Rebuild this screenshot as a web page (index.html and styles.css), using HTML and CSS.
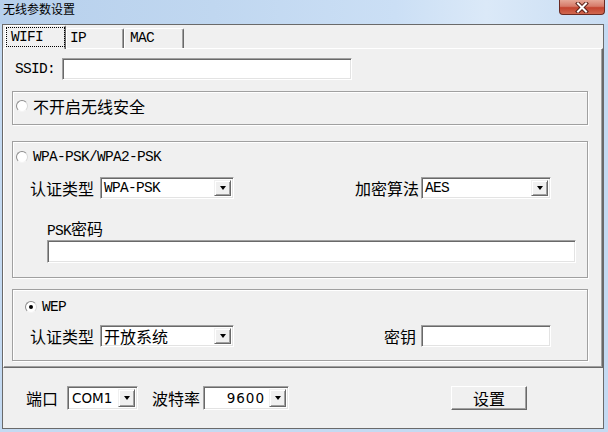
FILE: index.html
```
<!DOCTYPE html>
<html lang="zh-CN">
<head>
<meta charset="utf-8">
<title>无线参数设置</title>
<link rel="stylesheet" href="styles.css">
</head>
<body>
<div class="titlebar">
  <span class="title">无线参数设置</span>
  <div class="close">
    <svg width="14" height="11" viewBox="0 0 14 11"><path d="M3 1.5 L11 9.5 M11 1.5 L3 9.5" stroke="#5a2019" stroke-width="4" stroke-linecap="square"/><path d="M3 1.5 L11 9.5 M11 1.5 L3 9.5" stroke="#ffffff" stroke-width="2" stroke-linecap="square"/></svg>
  </div>
</div>
<div class="window">
  <div class="tabs">
    <div class="tab active"><span class="focus">WIFI</span></div>
    <div class="tab t-ip">IP</div>
    <div class="tab t-mac">MAC</div>
  </div>
  <div class="panel">
    <div class="ssid-row"><span class="en ssid-lbl">SSID:</span><div class="input ssid"></div></div>

    <div class="group g1">
      <div class="radio-row r1"><span class="radio"></span><span class="cn">不开启无线安全</span></div>
    </div>

    <div class="group g2">
      <div class="radio-row r1"><span class="radio"></span><span class="en">WPA-PSK/WPA2-PSK</span></div>
      <div class="field-row">
        <div class="pair"><span class="lbl">认证类型</span><div class="select s-auth"><span class="val en">WPA-PSK</span><span class="arrow"></span></div></div>
        <div class="pair"><span class="lbl lbl-tight">加密算法</span><div class="select s-enc"><span class="val en">AES</span><span class="arrow"></span></div></div>
      </div>
      <div class="psk-label"><span class="en">PSK</span>密码</div>
      <div class="input psk"></div>
    </div>

    <div class="group g3">
      <div class="radio-row r3"><span class="radio checked"></span><span class="en">WEP</span></div>
      <div class="field-row fr3">
        <div class="pair"><span class="lbl">认证类型</span><div class="select s-auth"><span class="val">开放系统</span><span class="arrow"></span></div></div>
        <div class="pair"><span class="lbl lbl-key">密钥</span><div class="input key"></div></div>
      </div>
    </div>
  </div>
  <div class="footer">
    <span class="lbl-port">端口</span>
    <div class="select s-com"><span class="val num">COM1</span><span class="arrow"></span></div>
    <span class="lbl-baud">波特率</span>
    <div class="select s-baud"><span class="val num right">9600</span><span class="arrow"></span></div>
    <div class="button">设置</div>
  </div>
</div>
</body>
</html>
```
FILE: styles.css
```
* { box-sizing: border-box; }
html, body { margin: 0; padding: 0; }
body {
  width: 608px;
  height: 432px;
  overflow: hidden;
  background: #c4daf2;
  font-family: "Noto Sans CJK SC", sans-serif;
  font-size: 16px;
  color: #000;
}
.en {
  font-family: "Liberation Mono", "Noto Sans CJK SC", monospace;
  font-size: 14.5px;
  letter-spacing: -0.7px;
}
.titlebar {
  height: 24px;
  display: flex;
  justify-content: space-between;
  align-items: flex-start;
  background: linear-gradient(to right, #b7d0ec 0%, #c0d7f0 35%, #cbdff5 65%, #dbe9f8 80%, #c9ddf3 100%);
}
.title {
  font-size: 12px;
  line-height: 16px;
  padding: 1px 0 0 3px;
}
.close {
  width: 46px;
  height: 15px;
  margin-right: 3px;
  border: 1px solid #6a2a22;
  border-top: none;
  border-radius: 0 0 4px 4px;
  background: linear-gradient(#e6a797 0%, #d67a69 45%, #c3432f 55%, #d06850 100%);
  display: flex;
  justify-content: center;
  align-items: center;
}
.close svg { display: block; }
.window {
  margin-left: 2px;
  width: 602px;
  height: 405px;
  border: 1px solid #6a6a6a;
  background: #f0f0f0;
  display: flex;
  flex-direction: column;
}
.tabs {
  height: 23px;
  display: flex;
  align-items: flex-end;
  padding-left: 2px;
  flex: none;
}
.tab {
  height: 20px;
  border-top: 1px solid #fff;
  border-left: 1px solid #fff;
  border-right: 1px solid #696969;
  border-radius: 2px 2px 0 0;
  box-shadow: inset -1px 0 0 #a0a0a0;
  font-family: "Liberation Mono", monospace;
  font-size: 14.5px;
  letter-spacing: -0.7px;
  line-height: 19px;
}
.t-ip { width: 58px; padding-left: 3px; }
.t-mac { width: 60px; padding-left: 5px; }
.tab.active {
  width: 61px;
  height: 24px;
  margin-bottom: -1px;
  position: relative;
  z-index: 1;
  background: #f0f0f0;
  padding: 1px 1px 2px 0;
}
.focus {
  display: block;
  width: 59px;
  height: 20px;
  border: 1px dotted #000;
  padding-left: 4px;
  line-height: 18px;
}
.panel {
  flex: none;
  height: 320px;
  border-top: 1px solid #fff;
  border-left: 1px solid #fff;
  border-right: 1px solid #696969;
  border-bottom: 1px solid #696969;
  box-shadow: inset -1px -1px 0 #a0a0a0;
  padding-left: 8px;
}
.ssid-row {
  margin-top: 9px;
  height: 22px;
  display: flex;
  align-items: center;
  padding-left: 3px;
}
.ssid-lbl { width: 40px; margin-right: 7px; }
.input {
  background: #fff;
  border-top: 1px solid #a0a0a0;
  border-left: 1px solid #a0a0a0;
  border-bottom: 1px solid #fff;
  border-right: 1px solid #fff;
  box-shadow: inset 1px 1px 0 #696969, inset -1px -1px 0 #e3e3e3;
}
.input.ssid { width: 290px; height: 22px; }
.group {
  width: 576px;
  border: 1px solid #a0a0a0;
  box-shadow: inset 1px 1px 0 #fff, 1px 1px 0 #fff;
}
.g1 {
  margin-top: 11px;
  height: 34px;
  padding-bottom: 4px;
  display: flex;
  align-items: center;
}
.g2 {
  margin-top: 16px;
  height: 137px;
  padding-top: 5px;
}
.g3 {
  margin-top: 11px;
  height: 72px;
  padding-top: 7px;
}
.radio-row {
  display: flex;
  align-items: center;
  height: 20px;
  line-height: 20px;
}
.r1 { padding-left: 3px; }
.r3 { padding-left: 12px; }
.radio {
  flex: none;
  width: 12px;
  height: 12px;
  margin-right: 5px;
  border-radius: 50%;
  background: #fff;
  border: 1px solid;
  border-color: #8c8c8c #d8d8d8 #f4f4f4 #8c8c8c;
  display: flex;
  align-items: center;
  justify-content: center;
}
.radio.checked::after {
  content: "";
  width: 4px;
  height: 4px;
  border-radius: 50%;
  background: #000;
}
.field-row {
  margin-top: 10px;
  height: 22px;
  display: flex;
  justify-content: space-between;
  align-items: center;
  padding-left: 17px;
  padding-right: 36px;
}
.fr3 { margin-top: 8px; }
.pair {
  display: flex;
  align-items: center;
  line-height: 20px;
}
.lbl { margin-right: 6px; }
.lbl-tight { margin-right: 2px; }
.lbl-key { margin-right: 5px; }
.select {
  display: flex;
  align-items: stretch;
  background: #fff;
  border-top: 1px solid #a0a0a0;
  border-left: 1px solid #a0a0a0;
  border-bottom: 1px solid #fff;
  border-right: 1px solid #fff;
  box-shadow: inset 1px 1px 0 #696969, inset -1px -1px 0 #e3e3e3;
  padding: 2px;
}
.s-auth { width: 134px; height: 22px; }
.s-enc { width: 130px; height: 22px; }
.s-com { width: 71px; height: 24px; }
.s-baud { width: 86px; height: 24px; }
.val {
  flex: 1;
  padding-left: 1px;
  display: flex;
  align-items: center;
  white-space: nowrap;
  line-height: 16px;
}
.num {
  font-family: "DejaVu Sans", sans-serif;
  font-size: 13.5px;
}
.s-com .num { padding-left: 2px; }
.right {
  justify-content: flex-end;
  padding-right: 4px;
  letter-spacing: 1px;
}
.arrow {
  flex: none;
  width: 17px;
  background: #f0f0f0;
  border: 1px solid;
  border-color: #f0f0f0 #696969 #696969 #f0f0f0;
  box-shadow: inset 1px 1px 0 #fff, inset -1px -1px 0 #a0a0a0;
  display: flex;
  align-items: center;
  justify-content: center;
}
.arrow::after {
  content: "";
  width: 0;
  height: 0;
  border-left: 3.5px solid transparent;
  border-right: 3.5px solid transparent;
  border-top: 4px solid #000;
}
.psk-label {
  margin-top: 19px;
  height: 20px;
  line-height: 20px;
  padding-left: 34px;
}
.input.psk {
  margin: 2px 0 0 34px;
  width: 529px;
  height: 23px;
}
.input.key { width: 130px; height: 22px; }
.footer {
  flex: none;
  height: 60px;
  display: flex;
  align-items: center;
  padding-left: 23px;
  line-height: 20px;
}
.lbl-port { margin-right: 9px; }
.lbl-baud { margin-left: 14px; margin-right: 3px; }
.button {
  margin-left: 162px;
  width: 76px;
  height: 24px;
  display: flex;
  align-items: center;
  justify-content: center;
  background: #f0f0f0;
  border: 1px solid;
  border-color: #fff #696969 #696969 #fff;
  box-shadow: inset -1px -1px 0 #a0a0a0;
}
```
